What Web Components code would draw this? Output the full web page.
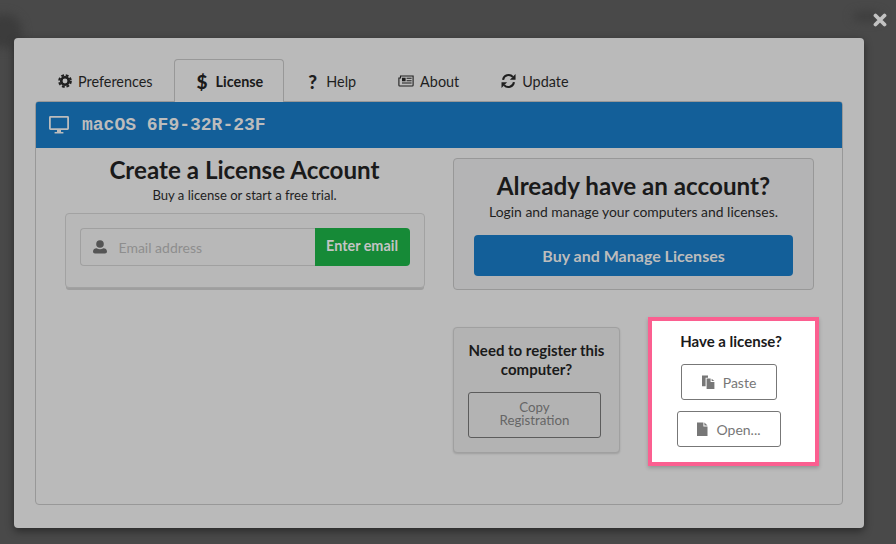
<!doctype html>
<html>
<head>
<meta charset="utf-8">
<style>
  html, body { margin: 0; height: 100%; }
  body { background: #494949; font-family: Lato, "Open Sans", sans-serif; color: #1a1a1a; overflow: hidden; }
</style>
</head>
<body>
<license-dialog>
  <dialog-tabs slot="tabs">
    <dialog-tab icon="cog" icon-width="15">Preferences</dialog-tab>
    <dialog-tab icon="dollar" icon-width="15" active>License</dialog-tab>
    <dialog-tab icon="question" icon-width="15">Help</dialog-tab>
    <dialog-tab icon="news" icon-width="16">About</dialog-tab>
    <dialog-tab icon="refresh" icon-width="15">Update</dialog-tab>
  </dialog-tabs>
  <machine-bar slot="bar">macOS 6F9-32R-23F</machine-bar>
  <create-account slot="left"></create-account>
  <manage-account slot="right"></manage-account>
  <register-card slot="right"></register-card>
</license-dialog>

<script>
const ICONS = {
  cog: `<svg viewBox="0 0 16 16" width="14" height="14"><circle cx="8" cy="8" r="4.3" fill="none" stroke="currentColor" stroke-width="3"/><circle cx="8" cy="8" r="6.6" fill="none" stroke="currentColor" stroke-width="2.4" stroke-dasharray="3.2 2"/></svg>`,
  news: `<svg viewBox="0 0 16 12" width="16" height="12"><path d="M2.5 1h12.6v9.2a.8.8 0 0 1-.8.8H1.7a.8.8 0 0 1-.8-.8V3h1.6z" fill="none" stroke="currentColor" stroke-width="1.1"/><path d="M4 2.8h3.6v3.4H4zM8.6 2.8h5v1H8.6zM8.6 5.2h5v1H8.6zM4 7.4h9.6v1H4z" fill="currentColor"/></svg>`,
  refresh: `<svg viewBox="0 0 16 16" width="16" height="16"><path d="M2.200 6.800A6 6 0 0 1 12.600 3.600" fill="none" stroke="currentColor" stroke-width="2.200"/><path d="M15.500 .6v6H9.500z" fill="currentColor"/><path d="M13.800 9.200A6 6 0 0 1 3.400 12.400" fill="none" stroke="currentColor" stroke-width="2.200"/><path d="M.5 15.400v-6h6z" fill="currentColor"/></svg>`,
  desktop: `<svg viewBox="0 0 20 18" width="20" height="18"><path fill-rule="evenodd" d="M1.4 0h17.2A1.4 1.4 0 0 1 20 1.4v11.2a1.4 1.4 0 0 1-1.4 1.4H12v2h2.4v1.6H5.6V16H8v-2H1.4A1.4 1.4 0 0 1 0 12.6V1.4A1.4 1.4 0 0 1 1.4 0zM1.8 1.8v10.4h16.4V1.8z" fill="currentColor"/></svg>`,
  user: `<svg viewBox="0 0 14 14" width="14" height="14"><circle cx="7" cy="4" r="3.8" fill="currentColor"/><path d="M0 11.6C0 9.4 1.6 8.200 3.600 8.200c1 .7 2.100 1 3.400 1s2.400-.3 3.400-1c2 0 3.600 1.200 3.600 3.400 0 1.300-.8 2-2 2H2c-1.200 0-2-.7-2-2z" fill="currentColor"/></svg>`,
  files: `<svg viewBox="0 0 13 14" width="13" height="14"><path d="M0 .6h6v2.200H3.600v8.400H0z" fill="currentColor"/><path d="M4.600 3.600h4v3.400H12.400v7H4.600z" fill="currentColor"/><path d="M9.600 3.800l2.800 2.300H9.600z" fill="currentColor"/></svg>`,
  file: `<svg viewBox="0 0 11 14" width="11" height="14"><path d="M0 .5h6.400v4h4.100V14H0z" fill="currentColor"/><path d="M7.400.6l3.100 3H7.400z" fill="currentColor"/></svg>`,
  close: `<svg viewBox="0 0 14 14" width="14" height="14"><path d="M2.500 2.500l9 9M11.500 2.500l-9 9" fill="none" stroke="currentColor" stroke-width="3.800" stroke-linecap="round"/></svg>`
}
const GLYPHS = { dollar: '$', question: '?' }

class DialogIcon extends HTMLElement {
  constructor() {
    super()
    this.attachShadow({ mode: 'open' })
  }
  connectedCallback() {
    const name = this.getAttribute('name')
    const inner = GLYPHS[name] ? `<span>${GLYPHS[name]}</span>` : ICONS[name]
    this.shadowRoot.innerHTML = `
      <style>
        :host { display: inline-flex; align-items: center; justify-content: center; flex: none; }
        svg { display: block; }
        span { font: 900 19px/1 Lato, sans-serif; }
      </style>${inner}`
  }
}
customElements.define('dialog-icon', DialogIcon)

class LicenseDialog extends HTMLElement {
  constructor() {
    super()
    this.attachShadow({ mode: 'open' })
    this.shadowRoot.innerHTML = `
      <style>
        :host { display: block; height: 544px; box-sizing: border-box; padding: 38px 32px 16px 14px; position: relative; overflow: hidden; }
        .smear { position: absolute; background: #3c3c3c; filter: blur(5px); border-radius: 50%; }
        .close { position: absolute; left: 873px; top: 13px; color: #c2c2c2; }
        .modal { height: 490px; box-sizing: border-box; background: #bababa; border-radius: 4px; padding: 21px 21px 23px 21px;
                 box-shadow: 0 3px 9px rgba(0,0,0,.45); position: relative; display: flex; flex-direction: column; }
        .panel { flex: 1; margin-top: -1px; border: 1px solid #989898; border-radius: 4px; display: flex; flex-direction: column; min-height: 0; }
        .body { flex: 1; display: grid; grid-template-columns: 417px 1fr; }
        .left { display: block; }
        .right { display: flex; flex-direction: column; padding-top: 10px; }
      </style>
      <div class="smear" style="left:-14px;top:14px;width:36px;height:34px"></div>
      <div class="smear" style="left:852px;top:12px;width:30px;height:9px"></div>
      <dialog-icon class="close" name="close"></dialog-icon>
      <div class="modal">
        <slot name="tabs"></slot>
        <div class="panel">
          <slot name="bar"></slot>
          <div class="body">
            <div class="left"><slot name="left"></slot></div>
            <div class="right"><slot name="right"></slot></div>
          </div>
        </div>
      </div>`
  }
}
customElements.define('license-dialog', LicenseDialog)

class DialogTabs extends HTMLElement {
  constructor() {
    super()
    this.attachShadow({ mode: 'open' })
    this.shadowRoot.innerHTML = `
      <style>:host { display: flex; height: 43px; padding-left: 1px; position: relative; z-index: 1; }</style>
      <slot></slot>`
  }
}
customElements.define('dialog-tabs', DialogTabs)

class DialogTab extends HTMLElement {
  constructor() {
    super()
    this.attachShadow({ mode: 'open' })
  }
  connectedCallback() {
    const w = this.getAttribute('icon-width')
    this.shadowRoot.innerHTML = `
      <style>
        :host { display: flex; align-items: center; gap: 6px; padding: 0 20px; box-sizing: border-box; font-size: 14.400px; color: #1f1f1f;
                border: 1px solid transparent; border-bottom: 0; border-radius: 4px 4px 0 0; }
        :host([active]) { border-color: #989898; font-weight: 700; background: #bababa; color: #1a1a1a; }
        dialog-icon { width: ${w}px; }
      </style>
      <dialog-icon name="${this.getAttribute('icon')}"></dialog-icon><slot></slot>`
  }
}
customElements.define('dialog-tab', DialogTab)

class MachineBar extends HTMLElement {
  constructor() {
    super()
    this.attachShadow({ mode: 'open' })
    this.shadowRoot.innerHTML = `
      <style>
        :host { display: flex; align-items: center; gap: 13px; height: 46px; padding: 0 0 0 13px; background: #135f99; color: #bcbcbc;
                font: 700 18px "Liberation Mono", monospace; white-space: pre; border-radius: 2px 2px 0 0; }
      </style>
      <dialog-icon name="desktop"></dialog-icon><slot></slot>`
  }
}
customElements.define('machine-bar', MachineBar)

class CreateAccount extends HTMLElement {
  constructor() {
    super()
    this.attachShadow({ mode: 'open' })
    this.shadowRoot.innerHTML = `
      <style>
        :host { display: block; text-align: center; padding-top: 7px; }
        h2 { margin: 0; font-size: 24.200px; line-height: 30px; font-weight: 700; color: #1a1a1a; }
        p { margin: 1px 0 0; font-size: 13.100px; line-height: 18px; color: #1f1f1f; }
        .card { width: 360px; box-sizing: border-box; height: 75px; margin: 9px auto 0; padding: 14px; border: 1px solid #a2a2a2; border-radius: 4px;
                background: #b8b8b8; box-shadow: 0 3px 0 -1px #9e9e9e; }
        .group { display: flex; height: 38px; }
        .input { flex: 1; display: flex; align-items: center; gap: 12px; padding-left: 12px; border: 1px solid #a0a0a0; border-right: 0; border-radius: 4px 0 0 4px;
                 color: #8e8e8e; font-size: 14px; }
        .input dialog-icon { color: #555; }
        .go { width: 95px; background: #168a37; color: #c4c4c4; font-weight: 700; font-size: 14.400px; border-radius: 0 4px 4px 0; text-align: center; line-height: 36px; }
      </style>
      <h2>Create a License Account</h2>
      <p>Buy a license or start a free trial.</p>
      <div class="card">
        <div class="group">
          <div class="input"><dialog-icon name="user"></dialog-icon>Email address</div>
          <div class="go">Enter email</div>
        </div>
      </div>`
  }
}
customElements.define('create-account', CreateAccount)

class ManageAccount extends HTMLElement {
  constructor() {
    super()
    this.attachShadow({ mode: 'open' })
    this.shadowRoot.innerHTML = `
      <style>
        :host { display: block; width: 361px; height: 132px; box-sizing: border-box; padding: 12px 20px 0; text-align: center;
                background: #b4b4b5; border: 1px solid #989898; border-radius: 4px; }
        h2 { margin: 0; font-size: 24.200px; line-height: 30px; font-weight: 700; color: #1a1a1a; }
        p { margin: 2px 0 0; font-size: 13.900px; line-height: 18px; color: #1f1f1f; }
        .buy { margin-top: 14px; height: 41px; line-height: 41px; background: #135f99; color: #bcbcbc; font-size: 16px; font-weight: 700; border-radius: 4px; }
      </style>
      <h2>Already have an account?</h2>
      <p>Login and manage your computers and licenses.</p>
      <div class="buy">Buy and Manage Licenses</div>`
  }
}
customElements.define('manage-account', ManageAccount)

class RegisterCard extends HTMLElement {
  constructor() {
    super()
    this.attachShadow({ mode: 'open' })
    this.shadowRoot.innerHTML = `
      <style>
        :host { display: flex; align-items: flex-start; gap: 28px; margin-top: 27px; }
        .need { width: 167px; height: 126px; margin-top: 10px; box-sizing: border-box; padding: 13px 14px 0; text-align: center; background: #b3b3b3;
                border: 1px solid #a0a0a0; border-radius: 4px; box-shadow: 0 1px 2px rgba(0,0,0,.15); }
        h3 { margin: 0; font-size: 15px; line-height: 19px; font-weight: 700; color: #1a1a1a; }
        .copy { width: 133px; margin-top: 13px; height: 46px; box-sizing: border-box; padding-top: 8px; border: 1px solid #5c5c5c; border-radius: 3px; font-size: 13.300px; line-height: 13px; color: #666; }
        .have { width: 171px; height: 149px; box-sizing: border-box; padding: 11px 0 0; background: #fff; border: 4px solid #fb5f90; display: flex; flex-direction: column; align-items: center;
                box-shadow: 0 2px 4px rgba(0,0,0,.2); }
        .have h3 { margin: 0 5px 13px 0; }
        .btn { display: flex; align-items: center; justify-content: center; gap: 8px; height: 36px; box-sizing: border-box; border: 1px solid #777; border-radius: 3px; color: #777; font-size: 14px; margin-right: 9px; }
        .paste { width: 96px; }
        .open { width: 104px; margin-top: 11px; }
      </style>
      <div class="need">
        <h3>Need to register this computer?</h3>
        <div class="copy">Copy<br>Registration</div>
      </div>
      <div class="have">
        <h3>Have a license?</h3>
        <div class="btn paste"><dialog-icon name="files"></dialog-icon>Paste</div>
        <div class="btn open"><dialog-icon name="file"></dialog-icon>Open...</div>
      </div>`
  }
}
customElements.define('register-card', RegisterCard)
</script>
</body>
</html>
